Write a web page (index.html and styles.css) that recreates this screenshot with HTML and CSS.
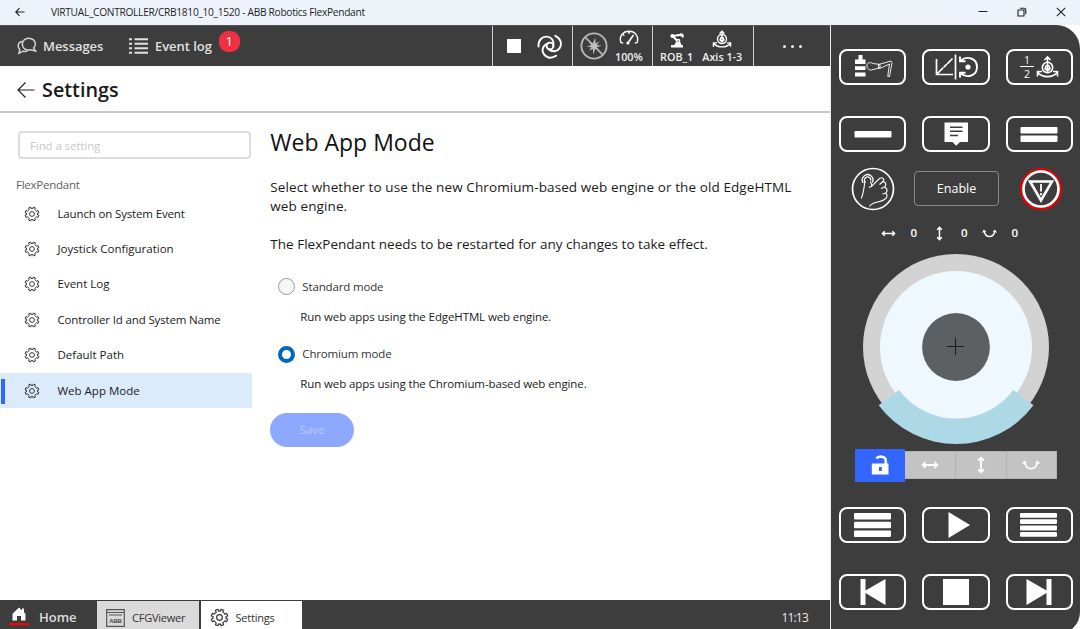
FILE: index.html
```html
<!DOCTYPE html>
<html lang="en">
<head>
<meta charset="utf-8">
<title>ABB Robotics FlexPendant</title>
<link rel="stylesheet" href="styles.css">
</head>
<body>
<svg class="defs" aria-hidden="true">
  <symbol id="gear" viewBox="0 0 18 18">
    <path d="M7.6 1.2 8 2.9 Q9 2.6 10 2.9 L10.4 1.2 12.9 2.2 12.1 3.9 Q13.3 4.7 14 5.9 L15.8 5.1 16.8 7.6 15.1 8 Q15.4 9 15.1 10 L16.8 10.4 15.8 12.9 14.1 12.1 Q13.3 13.3 12.1 14 L12.9 15.8 10.4 16.8 10 15.1 Q9 15.4 8 15.1 L7.6 16.8 5.1 15.8 5.9 14.1 Q4.7 13.3 4 12.1 L2.2 12.9 1.2 10.4 2.9 10 Q2.6 9 2.9 8 L1.2 7.6 2.2 5.1 3.9 5.9 Q4.7 4.7 5.9 4 L5.1 2.2Z" fill="none" stroke="currentColor" stroke-width="1.1" stroke-linejoin="round"/>
    <circle cx="9" cy="9" r="2.7" fill="none" stroke="currentColor" stroke-width="1.1"/>
  </symbol>
  <symbol id="arrow-h" viewBox="0 0 16 16">
    <path d="M1.5 8H14.5M4 5.5 1.5 8 4 10.5M12 5.5 14.5 8 12 10.5" fill="none" stroke="currentColor" stroke-width="1.6"/>
  </symbol>
  <symbol id="arrow-v" viewBox="0 0 16 16">
    <path d="M8 1.5V14.5M5.5 4 8 1.5 10.5 4M5.5 12 8 14.5 10.5 12" fill="none" stroke="currentColor" stroke-width="1.6"/>
  </symbol>
  <symbol id="arrow-c" viewBox="0 0 16 16">
    <path d="M2.4 5.5C3.5 13.2 12.5 13.2 13.6 5.5" fill="none" stroke="currentColor" stroke-width="1.5"/>
    <path d="M0 7.2 2 3.8 4.6 6.2ZM16 7.2 14 3.8 11.4 6.2Z" fill="currentColor"/>
  </symbol>
</svg>

<header class="titlebar">
  <svg class="tb-back" width="10" height="10" viewBox="0 0 10 10"><path d="M9.5 5H1M4.5 1.2 .8 5 4.5 8.8" fill="none" stroke="#222" stroke-width="1.1"/></svg>
  <span class="tb-title">VIRTUAL_CONTROLLER/CRB1810_10_1520 - ABB Robotics FlexPendant</span>
  <div class="tb-controls">
    <svg width="10" height="10" viewBox="0 0 10 10"><path d="M.5 4.5H9.5" stroke="#222"/></svg>
    <svg width="10" height="10" viewBox="0 0 10 10"><path d="M1 3H7V9H1ZM3 1.2H7.2Q8.800 1.2 8.800 2.800V7.2" fill="none" stroke="#222" stroke-width="1.1"/></svg>
    <svg width="10" height="10" viewBox="0 0 10 10"><path d="M.8.8 9.2 9.2M9.2.8.8 9.2" stroke="#222" stroke-width="1.1"/></svg>
  </div>
</header>

<div class="shell">
<main class="app">
  <nav class="topbar">
    <div class="messages">
      <svg width="20" height="18" viewBox="0 0 20 18" fill="none" stroke="#d4d4d4" stroke-width="1.5"><path d="M11.5 1.2C15.5 1.2 18.6 3.7 18.3 7.2 18.2 8.8 17.5 10 16.6 11L18.6 14.1 13.8 12.7C8.5 13.8 5.3 11 5.3 7.2 5.3 3.8 8 1.2 11.5 1.2Z"/><path d="M5.5 4.2C2.8 4.7 1.2 6.5 1.2 9 1.2 10.5 1.8 11.6 2.8 12.5L2 16.3 5.7 14.2C7.5 14.7 9.5 14.6 10.7 13.5"/></svg>
      <span>Messages</span>
    </div>
    <div class="eventlog">
      <svg width="19" height="16" viewBox="0 0 19 16" fill="#e0e0e0"><path d="M0 .3h3v2H0zM5.5.3H19v2H5.500zM0 4.800h3v2H0zM5.500 4.800H19v2H5.500zM0 9.300h3v2H0zM5.500 9.300H19v2H5.500zM0 13.800h3v2H0zM5.500 13.800H19v2H5.500z"/></svg>
      <span>Event log</span>
      <b class="badge">1</b>
    </div>
    <div class="cell run">
      <i class="stop"></i>
      <svg width="26" height="26" viewBox="0 0 26 26" fill="none" stroke="#fff" stroke-width="1.9" stroke-linecap="round">
        <circle cx="13" cy="13" r="3.400"/>
        <path d="M1.500 13.500C1.200 7 5 3.300 10 3.600 14.500 3.900 17.500 8 16.400 13"/>
        <path d="M1.500 13.500C1.200 7 5 3.300 10 3.600 14.500 3.900 17.500 8 16.400 13" transform="rotate(120 13 13)"/>
        <path d="M1.500 13.500C1.200 7 5 3.300 10 3.600 14.500 3.900 17.500 8 16.400 13" transform="rotate(240 13 13)"/>
      </svg>
    </div>
    <div class="cell speed">
      <svg width="28" height="28" viewBox="0 0 28 28"><circle cx="14" cy="14" r="12.600" fill="none" stroke="#b8b8b8" stroke-width="1.900"/><path d="M15.300 5.500 15.500 11.500 19.500 9.500 16.800 12.900 22 13.800 16.800 14.900 19 19 15.300 16.600 13.500 22.500 12.800 16.700 9 18.800 11.400 15.200 6.500 14.500 11.200 13.200 9 9.500 12.700 11.700Z" fill="#c0c0c0"/><path d="M5.500 5.500 22.500 22.500" stroke="#c0c0c0" stroke-width="1.700"/></svg>
      <div class="stack">
        <svg width="20" height="16" viewBox="0 0 20 16" fill="none" stroke="#fff" stroke-width="1.400"><path d="M4.200 13.200 1.800 12.500C0 6 4 1.200 10 1.200S20 6 18.200 12.500L15.800 13.200M10 1.500V4M3.800 4.200 5.300 5.700"/><path d="m14.500 5-6 8.500" stroke-width="1.600"/><circle cx="8.900" cy="13" r="1.600" fill="#fff" stroke="none"/></svg>
        <span>100%</span>
      </div>
    </div>
    <div class="cell unit">
      <div class="stack">
        <svg width="16" height="15" viewBox="0 0 16 15"><path d="M3.500 3 12 1.800M4.500 4 9 8.500" fill="none" stroke="#fff" stroke-width="2"/><path d="M11 .3 14 .8 15 3.200 13.800 5.200 12.800 3.500 11 3.300ZM6.500 9.500H11.500L12.500 12H14V14.500H2V12H5.500Z" fill="#fff"/><circle cx="3.300" cy="3" r="1.900" fill="#fff"/><circle cx="9.200" cy="8" r="2.200" fill="#fff"/><circle cx="9.200" cy="8" r=".7" fill="#3d3d3d"/></svg>
        <span>ROB_1</span>
      </div>
      <div class="stack">
        <svg width="20" height="18" viewBox="0 0 24 22" fill="none" stroke="#fff" stroke-width="1.700"><circle cx="12" cy="11" r="5.500"/><circle cx="12" cy="11" r="2"/><path d="M12 1v13M9 4.500 12 1.500 15 4.500M9 11.500 12 14.500 15 11.500M2 16.500C6 22 18 22 22 16.500M1.500 20.500V15.800H6M22.500 20.500V15.800H18"/></svg>
        <span>Axis 1-3</span>
      </div>
    </div>
    <div class="cell more"><i></i><i></i><i></i></div>
  </nav>

  <div class="pagehead">
    <svg width="18" height="16" viewBox="0 0 18 16"><path d="M17.500 8H1M8.500 .5 1 8l7.500 7.500" fill="none" stroke="#222" stroke-width="1.200"/></svg>
    <h1>Settings</h1>
  </div>

  <div class="body">
    <aside class="sidebar">
      <input class="search" placeholder="Find a setting">
      <div class="group">FlexPendant</div>
      <ul class="menu">
        <li><svg><use href="#gear"/></svg><span class="tight">Launch on System Event</span></li>
        <li><svg><use href="#gear"/></svg><span>Joystick Configuration</span></li>
        <li><svg><use href="#gear"/></svg><span>Event Log</span></li>
        <li><svg><use href="#gear"/></svg><span class="tight">Controller Id and System Name</span></li>
        <li><svg><use href="#gear"/></svg><span>Default Path</span></li>
        <li class="active"><svg><use href="#gear"/></svg><span>Web App Mode</span></li>
      </ul>
    </aside>
    <section class="content">
      <h2>Web App Mode</h2>
      <p class="lead wide">Select whether to use the new Chromium-based web engine or the old EdgeHTML<br>web engine.</p>
      <p class="lead">The FlexPendant needs to be restarted for any changes to take effect.</p>
      <div class="option"><i class="radio"></i><span>Standard mode</span></div>
      <p class="hint">Run web apps using the EdgeHTML web engine.</p>
      <div class="option"><i class="radio on"></i><span>Chromium mode</span></div>
      <p class="hint">Run web apps using the Chromium-based web engine.</p>
      <button class="save">Save</button>
    </section>
  </div>

  <footer class="taskbar">
    <div class="home">
      <svg width="20" height="20" viewBox="0 0 20 20"><path d="M10 .5 3.500 6.800V13.500H8V9h4v4.500h4.500V6.800z" fill="#fff"/><path d="M13 1.500h2V6h-2z" fill="#fff"/><path d="M0 16h20v2.200H0z" fill="#f00"/></svg>
      <span>Home</span>
    </div>
    <div class="tab">
      <svg width="19" height="18" viewBox="0 0 19 18"><path d="M.7.7H18.300V17.300H.7ZM.7 3.500H18.300M3 6H16" fill="none" stroke="#555" stroke-width="1.200"/><text x="9.500" y="13.500" text-anchor="middle" class="abb">ABB</text></svg>
      <span>CFGViewer</span>
    </div>
    <div class="tab current">
      <svg width="19" height="19"><use href="#gear"/></svg>
      <span>Settings</span>
    </div>
    <time>11:13</time>
  </footer>
</main>

<aside class="pendant">
  <div class="keys">
    <button class="key"><svg width="40" height="24" viewBox="0 0 40 24"><path d="M5.500 0h4v4.500h3V9H2V4.500h3.500zM2 11.200h10.500V15H2zM2 17.500h10.500v4H2z" fill="#fff"/><path d="M14 9.500C15 7 18 7.500 20 8.500L27 9.500V13L20 14.500C17 16 13.500 14.500 14 9.500ZM25.500 9.500 38 6 39 7.500 36.500 21.500H34.800L35.300 17 36.500 9 28 13 25.500 13Z" fill="none" stroke="#fff" stroke-width=".9"/></svg></button>
    <button class="key"><svg width="44" height="26" viewBox="0 0 44 26" fill="none" stroke="#fff" stroke-width="1.700"><path d="M2.500 5V20.500H19M2.500 20.500 9.300 13.700M9.700 13.300 12.800 10.200M13.200 9.800 18.500 4.500M21.500 .5V25.500"/><path d="M26.500 6.500C33 1.500 43 4 43 13S33 24.500 26.500 19.500M26 2.500V7.200H31.500M26 23.500V18.800H31.500" stroke-width="1.900"/><circle cx="34" cy="13" r="2.600" fill="#fff" stroke="none"/></svg></button>
    <button class="key"><svg width="40" height="30" viewBox="0 -2 40 30"><text x="8" y="9.500" class="frac" text-anchor="middle">1</text><text x="8" y="23.500" class="frac" text-anchor="middle">2</text><path d="M1 12.500H15" stroke="#fff"/><g fill="none" stroke="#fff" stroke-width="1.600"><circle cx="28.500" cy="13.500" r="5.200"/><circle cx="28.500" cy="13.500" r="2"/><path d="M28.500 2.500V16.500M25.500 6 28.500 3 31.500 6M25.500 14 28.500 17 31.500 14M19 18.500C23 24 34 24 38 18.500M18.500 22.500V17.500H23M38.500 22.500V17.500H34"/></g></svg></button>
    <button class="key"><svg width="38" height="26" viewBox="0 0 38 26" fill="#fff"><rect x=".5" y="10" width="37" height="6.500" rx="1"/></svg></button>
    <button class="key"><svg width="26" height="26" viewBox="0 0 26 26"><path d="M1.500 1.500H25V21H17L13.200 24.700 9.500 21H1.500z" fill="#fff"/><path d="M7 6.200H19.500M7 10.300H19.500M7 14.400H15" stroke="#3d3d3d" stroke-width="1.500"/></svg></button>
    <button class="key"><svg width="38" height="26" viewBox="0 0 38 26" fill="#fff"><rect x=".5" y="6" width="37" height="6.500" rx="1"/><rect x=".5" y="14.500" width="37" height="6.500" rx="1"/></svg></button>
  </div>

  <div class="enable-row">
    <svg width="44" height="44" viewBox="0 0 44 44" fill="none" stroke="#fff"><circle cx="22" cy="22" r="20.500" stroke-width="1.700"/><path d="M12.300 16A5.300 5.300 0 1 1 21.300 15.500M14.500 15.500A3.200 3.200 0 1 1 19.800 13.500" stroke-width="1.300"/><path d="M14 14.500C12.500 22 13 25 10.300 31.500M19.500 14.500 21 19 28.500 11.500C31 9.500 34 12 32 14.500L28.500 17.500M32 14.500C36 15.500 35.500 19.500 32.500 20.500L30 21.500M34 20.500C37.500 22.500 36 26 33.500 26.500L31.500 27M35 26.500C37 28.500 36 31 33.500 32.500 29 36 21 34 18.500 39.500M21 19 18 20.500" stroke-width="1.100"/></svg>
    <button class="enable">Enable</button>
    <svg width="44" height="44" viewBox="0 0 44 44" fill="none"><circle cx="22" cy="22" r="20" stroke="#e60000" stroke-width="2.200"/><circle cx="22" cy="22" r="17.500" stroke="#fff" stroke-width="2.700"/><path d="M11 14.500H33L22 33.500Z" stroke="#fff" stroke-width="2.600"/><path d="M22 17V24.500M22 26V28.300" stroke="#fff" stroke-width="1.800"/></svg>
  </div>

  <div class="axes">
    <svg><use href="#arrow-h"/></svg><span>0</span>
    <svg><use href="#arrow-v"/></svg><span>0</span>
    <svg><use href="#arrow-c"/></svg><span>0</span>
  </div>

  <svg class="joystick" width="188" height="192" viewBox="862 253 188 192">
    <circle cx="956" cy="347" r="93" fill="#d3d3d3"/>
    <circle cx="956" cy="347" r="76" fill="#f0f8ff"/>
    <path d="M878.700 405.300 899 390A71.400 71.400 0 0 0 1013.300 390L1033.500 405.300A96.600 96.600 0 0 1 878.700 405.300Z" fill="#add8e6"/>
    <circle cx="956" cy="347" r="33.900" fill="#5c6063"/>
    <path d="M947 346.500H964M955.500 338V355" stroke="#1a1a1a"/>
  </svg>

  <div class="locks">
    <button class="lock on"><svg width="18" height="20" viewBox="0 0 18 20"><path d="M5.500 3.500C7 1 14.800 .3 14.800 6V9" fill="none" stroke="#fff" stroke-width="2.600"/><path d="M.8 8.500H17.500V19.500H.8Z" fill="#fff"/><path d="M8 12H10.800V16H8Z" fill="#36f"/></svg></button>
    <button class="lock"><svg width="18" height="18"><use href="#arrow-h"/></svg></button>
    <button class="lock"><svg width="18" height="18"><use href="#arrow-v"/></svg></button>
    <button class="lock"><svg width="18" height="18"><use href="#arrow-c"/></svg></button>
  </div>

  <div class="keys media">
    <button class="key"><svg width="38" height="26" viewBox="0 0 38 26" fill="#fff"><rect x="0" y="1" width="37" height="6.500" rx="1"/><rect x="0" y="9.700" width="37" height="6.500" rx="1"/><rect x="0" y="18.400" width="37" height="6.500" rx="1"/></svg></button>
    <button class="key"><svg width="28" height="26" viewBox="0 0 28 26"><path d="M6.500 0V26L28 13z" fill="#fff"/></svg></button>
    <button class="key"><svg width="38" height="26" viewBox="0 0 38 26" fill="#fff"><rect x="0" y="1" width="37" height="4.800" rx="1"/><rect x="0" y="7.300" width="37" height="4.800" rx="1"/><rect x="0" y="13.600" width="37" height="4.800" rx="1"/><rect x="0" y="19.900" width="37" height="4.800" rx="1"/></svg></button>
    <button class="key"><svg width="26" height="26" viewBox="0 0 26 26" fill="#fff"><path d="M.5 0H5.500V11.500L25.500 0V26L5.500 14V26H.5z"/></svg></button>
    <button class="key"><svg width="26" height="26" viewBox="0 0 26 26"><path d="M0 0H26V26H0z" fill="#fff"/></svg></button>
    <button class="key"><svg width="26" height="26" viewBox="0 0 26 26" fill="#fff"><path d="M25.500 0H20.500V11.500L.5 0V26L20.500 14V26H25.500z"/></svg></button>
  </div>
</aside>
</div>
</body>
</html>
```
FILE: styles.css
```css
* { box-sizing: border-box; }
body {
  margin: 0;
  width: 1080px;
  height: 629px;
  overflow: hidden;
  display: flex;
  flex-direction: column;
  background: #fff;
  color: #1a1a1a;
  font: 11.5px/16px "Open Sans", "Noto Sans", sans-serif;
}
h1, h2, p, ul { margin: 0; padding: 0; font-weight: 400; }
button { padding: 0; font: inherit; color: inherit; background: none; border: 0; }
svg { display: block; flex: none; }
.defs { position: absolute; width: 0; height: 0; }

.titlebar {
  height: 25px;
  flex: none;
  display: flex;
  align-items: center;
  padding: 0 14px 1px 15px;
  background: linear-gradient(90deg, #eef3fb 0 25%, #edf3f6 60%, #eef3fb 90%);
}
.tb-title { margin-left: 26px; font-size: 10.2px; letter-spacing: -.3px; color: #1f1f1f; }
.tb-controls { margin-left: auto; display: flex; gap: 29px; }

.shell { flex: 1; display: flex; min-height: 0; }
.app { width: 831px; border-right: 1px solid #e8e8e8; display: flex; flex-direction: column; }

.topbar { height: 41px; flex: none; display: flex; background: #3d3d3d; color: #e0e0e0; font-weight: 600; font-size: 13px; letter-spacing: -.05px; border-top: 1px solid #555; }
.messages, .eventlog { display: flex; align-items: center; }
.messages { padding-left: 17px; gap: 6px; width: 129px; }
.eventlog { gap: 7px; width: 363px; }
.badge { width: 21px; height: 21px; border-radius: 9px; background: #f03040; color: #fff; font-weight: 400; font-size: 13px; line-height: 21px; text-align: center; margin-bottom: 9px; }
.cell { display: flex; align-items: center; border-left: 1px solid #d0d0d0; font-size: 10.8px; color: #f0f0f0; letter-spacing: 0; }
.run { width: 80px; padding-left: 14px; gap: 16px; }
.stop { width: 14px; height: 14px; background: #fff; }
.speed { width: 80px; padding-left: 7px; gap: 7px; }
.unit { width: 101px; padding-left: 7px; gap: 9px; }
.stack { display: flex; flex-direction: column; align-items: center; line-height: 15px; height: 35px; justify-content: flex-end; gap: 3px; }
.unit .stack { gap: 1px; }
.more { width: 77px; justify-content: center; gap: 5px; }
.more i { width: 3px; height: 3px; border-radius: 50%; background: #eee; }

.pagehead { height: 46.5px; flex: none; display: flex; align-items: center; gap: 7px; padding: 3px 0 0 17px; border-bottom: 2px solid #c8c8c8; }
.pagehead h1 { font-size: 19.8px; font-weight: 600; line-height: 28px; }

.body { flex: 1; display: flex; min-height: 0; }
.sidebar { width: 252px; flex: none; padding-top: 18.5px; }
.search { display: block; margin-left: 18px; width: 233px; height: 28px; border: 2px solid #dcdcdc; border-radius: 4px; padding: 1px 10px 0; font: inherit; letter-spacing: -.1px; outline: 0; }
.search::placeholder { color: #c8c8c8; }
.group { padding: 18px 0 0 16px; letter-spacing: -.25px; color: #5f5f5f; height: 37px; }
.menu { list-style: none; }
.menu li { height: 35.4px; display: flex; align-items: center; padding-left: 24px; gap: 17.5px; }
.menu .tight { letter-spacing: -.15px; }
.menu svg { width: 16px; height: 16px; color: #333; }
.menu .active { background: #dcebfc; position: relative; }
.menu .active::before { content: ""; position: absolute; left: 1px; top: 6px; width: 4px; height: 25px; background: #36f; }

.content { padding: 13.5px 0 0 18.3px; }
h2 { font-size: 23px; line-height: 32px; color: #111; }
.lead { font-size: 13.5px; line-height: 19px; margin-top: 19px; letter-spacing: .02px; }
.wide { letter-spacing: .1px; }
h2 + .lead { margin-top: 20px; }
.option { display: flex; align-items: center; gap: 7px; padding-left: 8px; margin-top: 23.5px; height: 18px; color: #333; letter-spacing: -.15px; }
.radio { width: 17px; height: 17px; border: 1px solid #999; border-radius: 50%; background: #f6f6f6; }
.radio.on { border: 4px solid #0067c0; background: #fff; }
.hint { padding-left: 30px; margin-top: 13px; line-height: 16px; letter-spacing: -.11px; }
.hint + .option { margin-top: 20.5px; }
.save { display: block; width: 84px; height: 34px; border-radius: 17px; margin-top: 20.5px; padding-top: 1px; background: #8fa8ff; color: #b9c8ff; }

.taskbar { height: 29px; flex: none; display: flex; background: #3d3d3d; color: #333; }
.home { width: 97px; padding: 5px 0 0 9px; display: flex; align-items: center; gap: 10px; color: #dcdcdc; font-weight: 600; font-size: 13px; }
.tab { width: 102px; margin-right: 2px; height: 28px; margin-top: 1px; padding: 5px 0 0 9px; display: flex; align-items: center; gap: 7px; background: #dadada; font-size: 11px; letter-spacing: -.22px; }
.tab.current { width: 101px; margin-left: -.5px; background: #fff; }
.abb { font: 900 6px "Liberation Sans", sans-serif; fill: #444; }
.taskbar time { margin: 10px 22px 0 auto; color: #e8e8e8; font-size: 12px; letter-spacing: -.8px; }

.pendant { width: 249px; height: 609px; background: #3d3d3d; border-radius: 0 24px 22px 0; padding: 24px 7px 0 8px; color: #fff; }
.keys { display: grid; grid-template-columns: repeat(3, 67.4px); column-gap: 16px; row-gap: 31px; }
.key { height: 36px; border: 2px solid #fff; border-radius: 8px; display: flex; align-items: center; justify-content: center; }
.frac { font: 10.5px "Open Sans", sans-serif; fill: #fff; }
.enable-row { display: flex; align-items: center; justify-content: space-between; padding: 0 10.5px 0 11.5px; margin-top: 14.5px; }
.enable { width: 85px; height: 35px; border: 1px solid #888; border-radius: 4px; padding-top: 1px; font-size: 12.6px; }
.axes { display: grid; grid-template-columns: repeat(3, 25px 25.5px); justify-items: center; align-items: center; margin: 14.5px 0 0 37px; height: 16px; font-size: 11.5px; font-weight: 600; }
.axes svg { width: 15px; height: 15px; }
.joystick { margin: 12px 0 0 23px; }
.locks { display: flex; align-items: center; margin: 3.5px 0 0 15.5px; }
.lock { width: 50.7px; height: 28px; background: #c3c3c3; border: 1px solid #b2b2b2; border-left-width: 0; display: flex; align-items: center; justify-content: center; }
.lock.on { height: 33px; background: #36f; border: 0; }
.media { margin-top: 25.5px; }
```
